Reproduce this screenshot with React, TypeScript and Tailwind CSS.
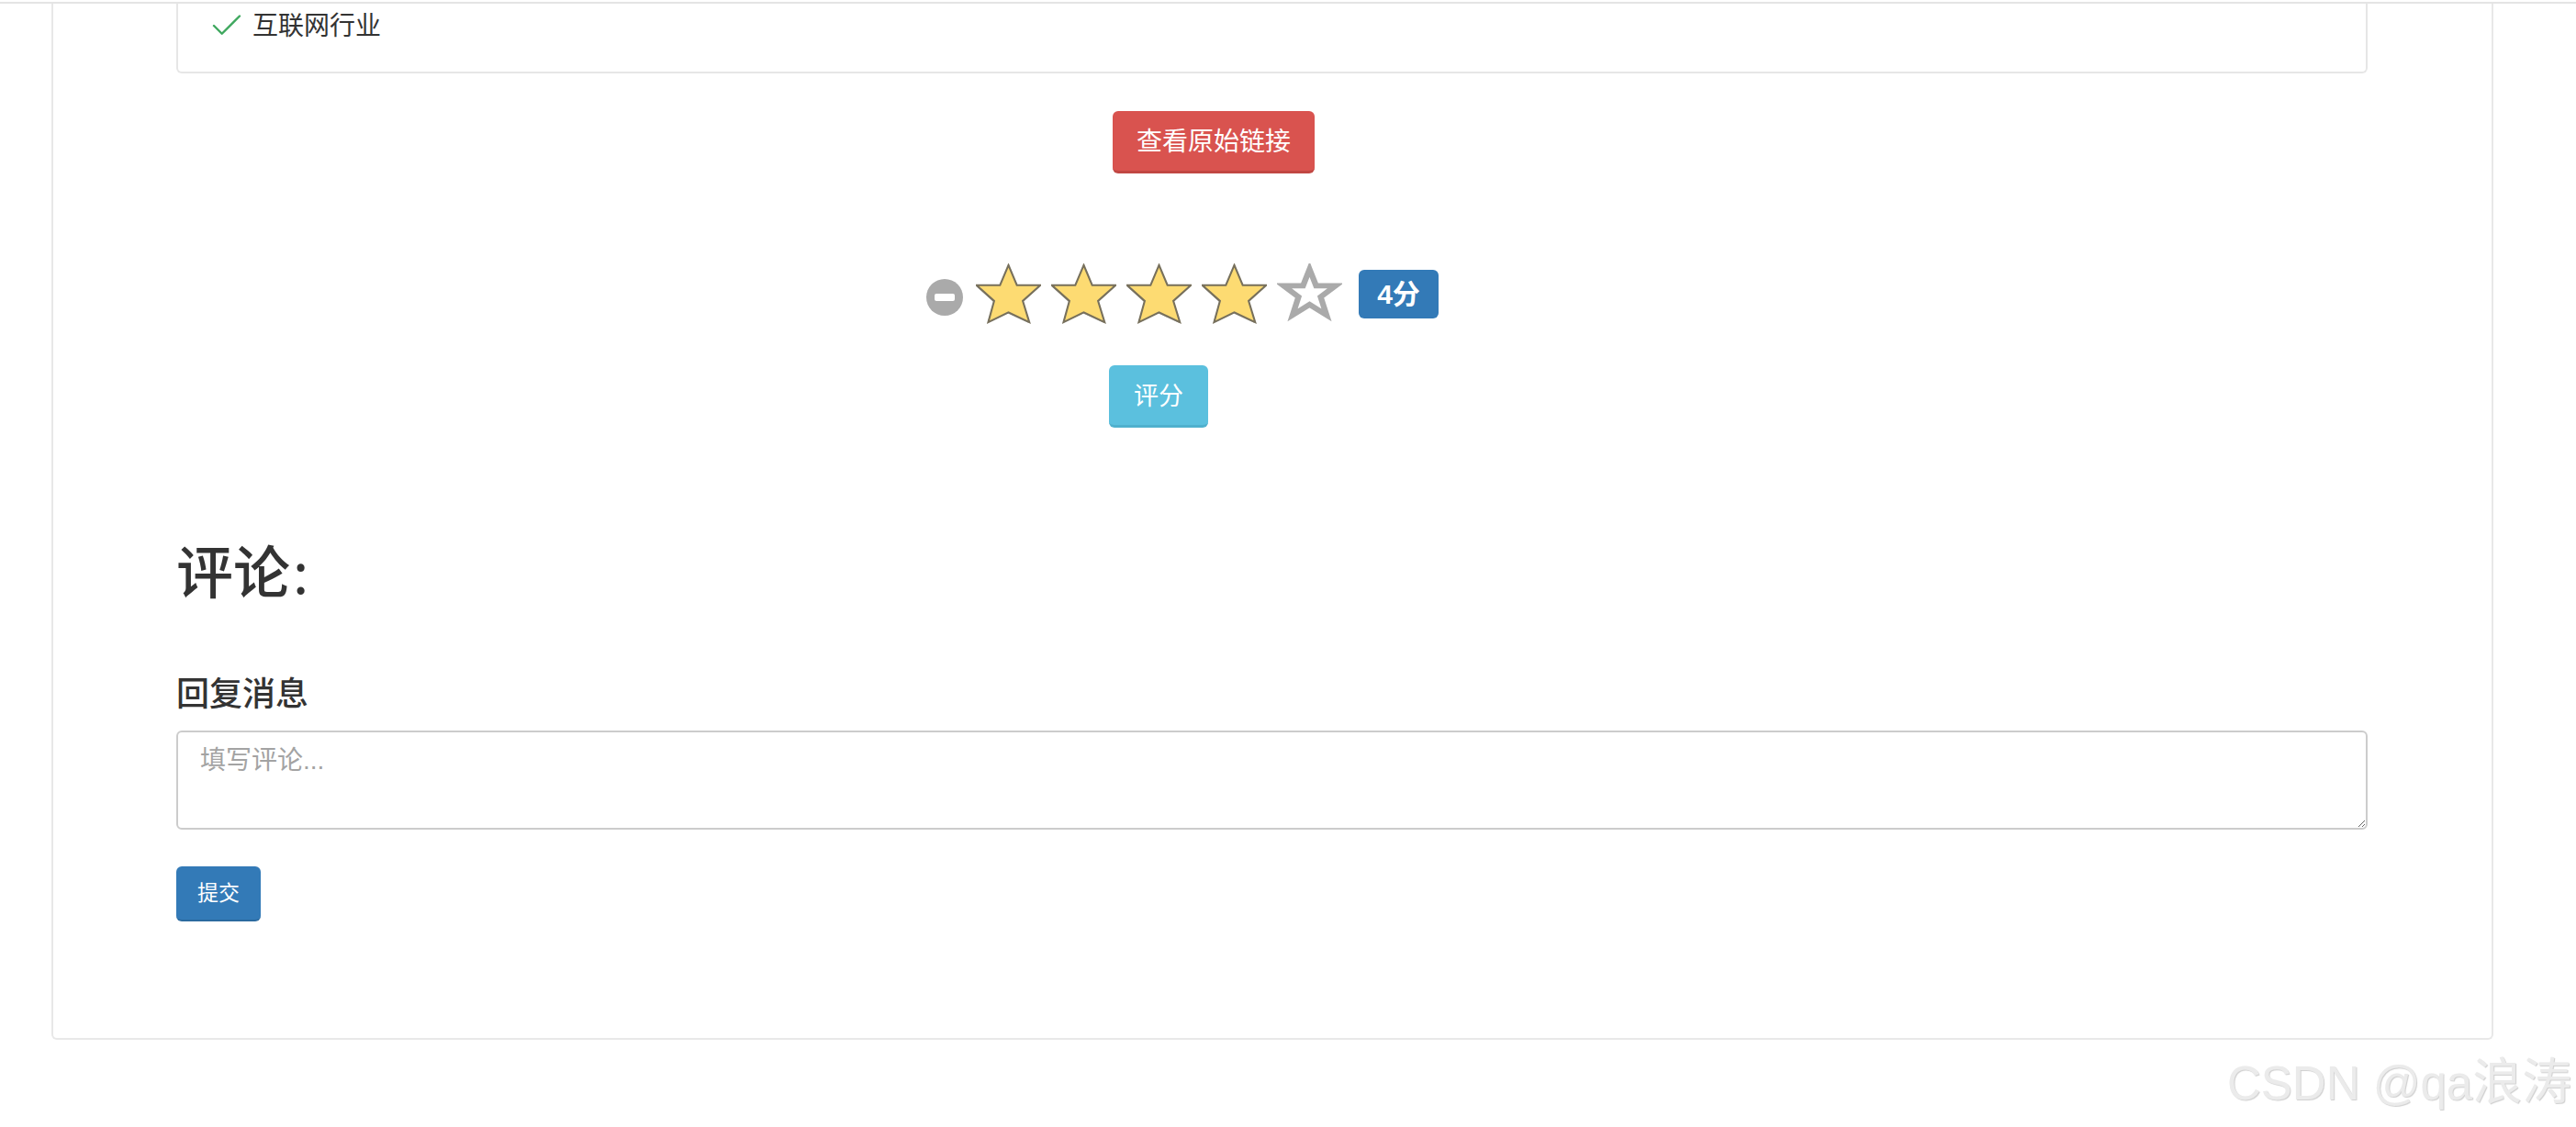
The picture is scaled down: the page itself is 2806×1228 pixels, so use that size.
import { Check } from "lucide-react"

const font = "font-['Liberation_Sans','Noto_Sans_CJK_SC',sans-serif]"
const starPoints = "50,3 63,36 99,36 72,62 82,97 50,81 19,97 28,62 1,36 37,36"

const FullStar = () => (
  <svg viewBox="0 0 100 100" preserveAspectRatio="none" className="w-[71px] h-[66px] mr-[11px] shrink-0">
    <polygon points={starPoints} transform="translate(-1 1.5)" fill="#a8a8a8" />
    <polygon points={starPoints} fill="#fddb72" stroke="#77705c" strokeWidth="3" strokeLinejoin="miter" />
  </svg>
)

const EmptyStar = () => (
  <svg viewBox="0 0 100 100" preserveAspectRatio="none" className="w-[71px] h-[64px] shrink-0">
    <polygon points="50,10 60,38 90,38 67,57 76,88 50,70 24,88 33,57 10,38 40,38" fill="#fff" stroke="#aaaaaa" strokeWidth="9" />
  </svg>
)

export default function App() {
  return (
    <div className={`relative w-[2806px] h-[1228px] overflow-hidden bg-white text-[#333] ${font}`}>
      <div className="h-[4px] bg-white border-b-2 border-[#e4e4e4]"></div>

      <div className="ml-[56px] w-[2660px] h-[1129px] border-x-2 border-b-2 border-[#e8e8e8] rounded-b-md pl-[134px] pr-[135px]">
        <div className="h-[76px] border-x-2 border-b-2 border-[#e6e6e6] rounded-b-md pl-[32px] pt-[3px] flex items-start">
          <Check className="w-[42px] h-[42px] shrink-0 text-[#3fa85f]" strokeWidth={1.4} />
          <span className="ml-[7px] mt-[3px] text-[28px] leading-[38px]">互联网行业</span>
        </div>

        <button className="block mt-[41px] ml-[1020px] w-[220px] h-[68px] pt-[2px] rounded-md bg-[#d9534f] border-b-[3px] border-[#c14743] text-white text-[28px]">
          查看原始链接
        </button>

        <div className="mt-[98px] ml-[817px] flex items-start">
          <div className="mt-[17px] mr-[14px] w-[40px] h-[40px] rounded-full bg-[#aaaaaa] flex items-center justify-center shrink-0">
            <div className="w-[22px] h-[8px] rounded-[2px] bg-white"></div>
          </div>
          <FullStar />
          <FullStar />
          <FullStar />
          <FullStar />
          <EmptyStar />
          <div className="ml-[18px] mt-[7px] w-[87px] h-[53px] rounded-md bg-[#337ab7] text-white text-[30px] font-bold flex items-center justify-center">
            4分
          </div>
        </div>

        <button className="block mt-[45px] ml-[1016px] w-[108px] h-[68px] pt-[3px] rounded-md bg-[#5bc0de] border-b-[3px] border-[#4fb0cd] text-white text-[27px]">
          评分
        </button>

        <h2 className="mt-[112px] text-[62px] leading-[84px] font-medium font-['Noto_Sans_CJK_SC',sans-serif]">
          评论<span className="ml-[3px] font-normal">:</span>
        </h2>

        <label className="block mt-[72px] text-[36px] leading-[46px] font-medium">回复消息</label>
        <textarea
          placeholder="填写评论..."
          className="block mt-[16px] w-full h-[108px] px-[24px] py-[12px] border-2 border-[#cccccc] rounded-md text-[28px] leading-[38px] outline-none placeholder:text-[#a3a3a3]"
        ></textarea>

        <button className="block mt-[40px] w-[92px] h-[60px] rounded-md bg-[#337ab7] border-b-2 border-[#2b6a9f] text-white text-[23px]">
          提交
        </button>
      </div>

      <div className="absolute left-[2426px] top-[1146px] leading-[66px] text-[#ebebeb] whitespace-nowrap [text-shadow:1px_1px_1px_#cfcfcf]">
        <span className="text-[51px]">CSDN @qa</span>
        <span className="text-[54px]">浪涛</span>
      </div>
    </div>
  )
}
